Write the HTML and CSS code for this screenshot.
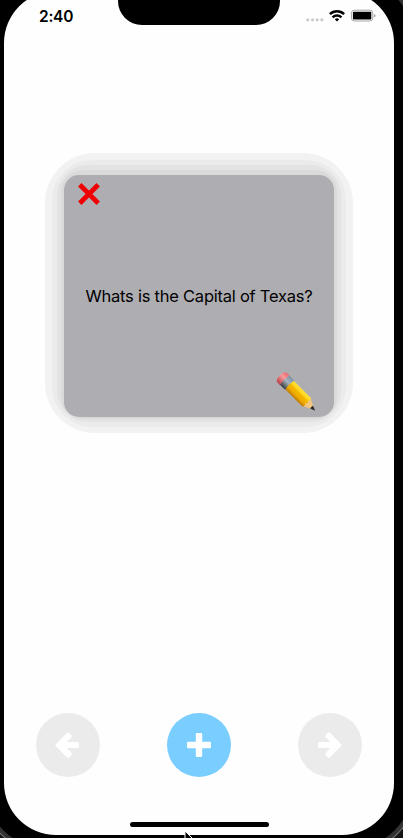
FILE: index.html
```html
<!DOCTYPE html>
<html lang="en">
<head>
<meta charset="utf-8">
<title>Flashcards</title>
<link rel="stylesheet" href="styles.css">
</head>
<body>
<div class="device">
  <main class="screen">
    <header class="status">
      <span class="time">2:40</span>
      <svg class="signals" width="72" height="16" viewBox="0 0 72 16">
        <g fill="#cacaca"><circle cx="1.8" cy="11.8" r="1.6"/><circle cx="6.5" cy="11.8" r="1.6"/><circle cx="11.2" cy="11.8" r="1.6"/><circle cx="15.9" cy="11.8" r="1.6"/></g>
        <g fill="none" stroke="#000" stroke-width="2.5"><path d="M23.9 6.2a10.2 10.2 0 0 1 14.2 0"/><path d="M26.6 9.3a6.3 6.3 0 0 1 8.8 0"/></g>
        <path d="M31 13.4l-2.2-2.2a3.2 3.2 0 0 1 4.4 0z"/>
        <rect x="45.4" y="2.2" width="21.4" height="10.8" rx="3" fill="#fff" stroke="#a7a5a8"/>
        <rect x="46.9" y="3.8" width="18.4" height="7.6" rx="1"/>
        <path d="M68 6v3.6q1.6-.5 1.6-1.8T68 6" fill="#a7a5a8"/>
      </svg>
    </header>
    <div class="notch"></div>
    <div class="glow glow-1"><div class="glow glow-2"><div class="glow glow-3"><div class="glow glow-4">
      <section class="card">
        <svg class="delete" width="22" height="22" viewBox="0 0 22 22"><path d="M1.8 1.8l18.4 18.4M20.2 1.8L1.8 20.2" stroke="#f00000" stroke-width="4.8"/></svg>
        <p class="question">Whats is the Capital of Texas?</p>
        <svg class="edit" width="42" height="42" viewBox="0 0 42 42">
          <defs>
            <linearGradient id="wood" x2="0" y2="1"><stop stop-color="#ffe13c"/><stop offset=".34" stop-color="#ffd21a"/><stop offset=".36" stop-color="#f5b900"/><stop offset=".7" stop-color="#efac00"/><stop offset="1" stop-color="#bd7900"/></linearGradient>
            <linearGradient id="metal" x2="0" y2="1"><stop stop-color="#7c91a5"/><stop offset=".45" stop-color="#a5b4c0"/><stop offset="1" stop-color="#36383b"/></linearGradient>
            <linearGradient id="rubber" x2="0" y2="1"><stop stop-color="#e56b71"/><stop offset=".4" stop-color="#f79a9c"/><stop offset="1" stop-color="#b94449"/></linearGradient>
          </defs>
          <g transform="translate(5.5 6) rotate(45)">
            <path d="M37-5.5l11 5.5-11 5.5z" fill="#f0c680"/>
            <path d="M12-6h25q2 1.7 0 3.8 2 2.2 0 4.2 2 1.9 0 4H12z" fill="url(#wood)"/>
            <path d="M44-2l5 2-5 2q-.8-2 0-4z" fill="#29292b"/>
            <path d="M4-6.5h9q-1.5 6.5 0 13H4z" fill="url(#metal)"/>
            <path d="M2-6.7h4q-1.6 6.7 0 13.4H2Q-1 6-1 0t3-6.7z" fill="url(#rubber)"/>
          </g>
        </svg>
      </section>
    </div></div></div></div>
    <nav class="actions">
      <button class="round" aria-label="Previous"><svg width="64" height="64" viewBox="0 0 64 64"><path d="M19.6 31.4L30.8 20q1.3-1.1 2.6 0l1.9 1.9q1.1 1.300 0 2.600L30.700 29H41.400q1.600 0 1.600 1.600v2.900q0 1.600-1.600 1.600H30.700l4.600 4.600q1.100 1.300 0 2.600l-1.900 1.900q-1.300 1.100-2.600 0L19.600 32.800q-.7-.7 0-1.400z" fill="#fff"/></svg></button>
      <button class="round add" aria-label="Add"><svg width="64" height="64" viewBox="0 0 64 64"><path d="M30 20h4q1.200 0 1.200 1.200v7.600h7.600q1.200 0 1.200 1.200v4q0 1.200-1.200 1.200h-7.600v7.600q0 1.200-1.200 1.200h-4q-1.200 0-1.200-1.200v-7.600h-7.600q-1.200 0-1.200-1.200v-4q0-1.200 1.200-1.200h7.600v-7.600q0-1.200 1.200-1.200z" fill="#fff"/></svg></button>
      <button class="round" aria-label="Next"><svg class="flip" width="64" height="64" viewBox="0 0 64 64"><path d="M20.600 31.4L31.8 20q1.3-1.1 2.6 0l1.9 1.9q1.1 1.3 0 2.6L31.7 29H42.400q1.600 0 1.600 1.600v2.900q0 1.600-1.600 1.600H31.700l4.600 4.600q1.100 1.300 0 2.600l-1.900 1.900q-1.300 1.100-2.600 0L20.600 32.800q-.7-.7 0-1.400z" fill="#fff"/></svg></button>
    </nav>
    <div class="home"></div>
  </main>
</div>
<svg class="pointer" width="12" height="18" viewBox="0 0 12 18"><path d="M1 1v14l3.5-3 2.5 5 2-1-2.5-5H11z" fill="#000" stroke="#fff"/></svg>
</body>
</html>
```
FILE: styles.css
```css
* { box-sizing: border-box; }
html, body { margin: 0; width: 403px; height: 838px; overflow: hidden; background: #151515; }
body { position: relative; font-family: Inter, "Liberation Sans", sans-serif; color: #000; }
.device {
  width: 426px; height: 870px; margin: -22px -14px 0;
  padding: 13px 18px 13px;
  background: #000; border-radius: 60px;
  box-shadow: 0 0 0 4px #333, 0 0 0 5px #777;
}
.screen {
  position: relative; width: 390px; height: 844px;
  background: #fefefe; border-radius: 52px; overflow: hidden;
  display: flex; flex-direction: column;
}
.status {
  height: 162px; flex: none; padding: 17px 16px 0 35px;
  display: flex; justify-content: space-between; align-items: flex-start;
}
.time { font-size: 15.5px; line-height: 17px; font-weight: 600; letter-spacing: -0.25px; }
.signals { display: block; }
.notch {
  position: absolute; left: 114px; top: 0; width: 162px; height: 34px;
  background: #000; border-radius: 0 0 24px 24px;
}
.glow { flex: none; }
.glow-1 { width: 308px; margin-left: 41px; padding: 7px 7px 6px; background: #f2f2f2; border-radius: 50px; }
.glow-2 { padding: 5px; background: #ebebeb; border-radius: 40px; }
.glow-3 { padding: 5px 4px 3px; background: #e3e3e3; border-radius: 31px; }
.glow-4 { padding: 5px 3px 2px; background: #dadada; border-radius: 22px; }
.card {
  width: 270px; height: 242px; padding: 8px 17px 5px 13.5px; border-radius: 15px; background: #aeadb2;
  display: flex; flex-direction: column; justify-content: space-between;
}
.delete { display: block; }
.question {
  margin: 0 0 0 -13.5px; width: 270px; padding-top: 17px;
  text-align: center; font-size: 16.5px; line-height: 22px; letter-spacing: -0.24px; white-space: nowrap;
}
.edit { display: block; align-self: flex-end; }
.actions { display: flex; justify-content: space-between; padding: 0 32px; margin-top: 280px; }
.round { display: block; width: 64px; height: 64px; padding: 0; border: 0; border-radius: 50%; background: #ebebeb; }
.round svg { display: block; }
.add { background: #7acdff; }
.flip { transform: scaleX(-1); }
.home { width: 139px; height: 5px; margin: 45px auto 0; border-radius: 3px; background: #000; }
.pointer { position: absolute; left: 184px; top: 830px; }
```
